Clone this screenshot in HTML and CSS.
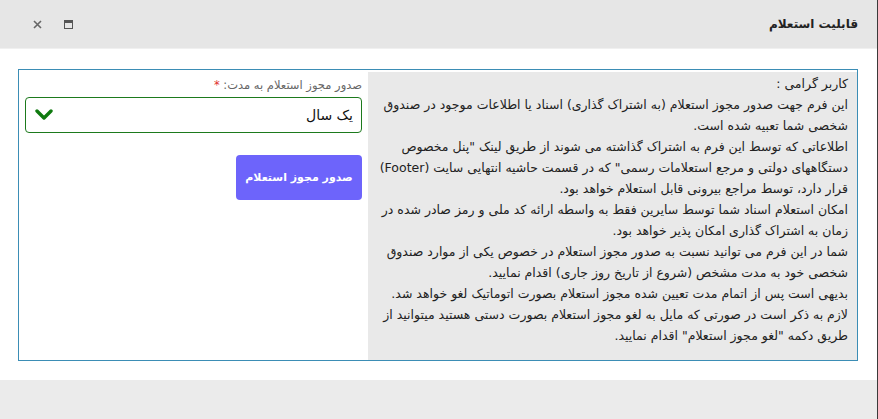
FILE: index.html
```html
<!DOCTYPE html>
<html lang="fa" dir="rtl">
<head>
<meta charset="utf-8">
<title>قابلیت استعلام</title>
<link rel="stylesheet" href="styles.css">
</head>
<body>
<div class="window">
  <header class="titlebar">
    <h1 class="title">قابلیت استعلام</h1>
    <div class="controls">
      <button class="ctl" aria-label="restore">
        <svg width="9" height="9" viewBox="0 0 9 9"><rect x="0.5" y="0.5" width="8" height="8" fill="none" stroke="#555" stroke-width="1"/><rect x="0" y="0" width="9" height="3" fill="#555"/></svg>
      </button>
      <button class="ctl" aria-label="close">
        <svg width="9" height="9" viewBox="0 0 9 9"><path d="M1 1 L8 8 M8 1 L1 8" stroke="#666" stroke-width="1.6" fill="none"/></svg>
      </button>
    </div>
  </header>
  <main class="content">
    <div class="panel">
      <section class="info">
        کاربر گرامی :<br>
        این فرم جهت صدور مجوز استعلام (به اشتراک گذاری) اسناد یا اطلاعات موجود در صندوق شخصی شما تعبیه شده است.<br>
        اطلاعاتی که توسط این فرم به اشتراک گذاشته می شوند از طریق لینک "پنل مخصوص دستگاههای دولتی و مرجع استعلامات رسمی" که در قسمت حاشیه انتهایی سایت (Footer) قرار دارد، توسط مراجع بیرونی قابل استعلام خواهد بود.<br>
        امکان استعلام اسناد شما توسط سایرین فقط به واسطه ارائه کد ملی و رمز صادر شده در زمان به اشتراک گذاری امکان پذیر خواهد بود.<br>
        شما در این فرم می توانید نسبت به صدور مجوز استعلام در خصوص یکی از موارد صندوق شخصی خود به مدت مشخص (شروع از تاریخ روز جاری) اقدام نمایید.<br>
        بدیهی است پس از اتمام مدت تعیین شده مجوز استعلام بصورت اتوماتیک لغو خواهد شد.<br>
        لازم به ذکر است در صورتی که مایل به لغو مجوز استعلام بصورت دستی هستید میتوانید از طریق دکمه "لغو مجوز استعلام" اقدام نمایید.
      </section>
      <section class="form">
        <label class="label">صدور مجوز استعلام به مدت: <span class="req">*</span></label>
        <div class="select">
          <span class="select-value">یک سال</span>
          <svg class="chev" width="18" height="12" viewBox="0 0 18 12"><path d="M2 2 L9 9 L16 2" stroke="#0f7a0f" stroke-width="3.4" fill="none" stroke-linecap="round" stroke-linejoin="round"/></svg>
        </div>
        <div class="actions">
          <button class="btn">صدور مجوز استعلام</button>
        </div>
      </section>
    </div>
  </main>
  <footer class="footer"></footer>
</div>
</body>
</html>
```
FILE: styles.css
```css
html, body {
  margin: 0;
  padding: 0;
  background: #fff;
}
body {
  font-family: "DejaVu Sans", "Noto Sans", sans-serif;
  color: #222;
}
.window {
  width: 878px;
  height: 419px;
  box-sizing: border-box;
  border-right: 1px solid #3a3a3a;
  display: flex;
  flex-direction: column;
  background: #fff;
}
.titlebar {
  height: 48px;
  flex: none;
  background: #e6e6e6;
  display: flex;
  align-items: center;
  justify-content: space-between;
  padding: 0 19px 0 32px;
  border-bottom: 1px solid #f0f0f0;
}
.title {
  margin: 0;
  font-size: 12px;
  font-weight: bold;
  color: #222;
}
.controls {
  display: flex;
  align-items: center;
  gap: 21px;
}
.ctl {
  border: 0;
  background: none;
  padding: 0;
  width: 10px;
  height: 10px;
  display: flex;
  align-items: center;
  justify-content: center;
}
.content {
  flex: 1;
  padding: 20px 19px 19px 18px;
}
.panel {
  border: 1px solid #3b8db5;
  display: flex;
  height: 100%;
  box-sizing: border-box;
}
.info {
  flex: 0 0 489px;
  box-sizing: border-box;
  background: #e9e9e9;
  margin-top: 2px;
  padding: 1px 9px 0 10px;
  font-size: 12.5px;
  line-height: 21px;
  color: #222;
}
.form {
  flex: 1;
  padding: 7px 6px 0 6px;
  display: flex;
  flex-direction: column;
}
.label {
  font-size: 11.5px;
  color: #666;
  line-height: 16px;
}
.req {
  color: #e0302f;
}
.select {
  margin-top: 4px;
  height: 36px;
  box-sizing: border-box;
  border: 1px solid #1d7a1d;
  border-radius: 4px;
  display: flex;
  align-items: center;
  justify-content: space-between;
  padding: 0 8px 0 9px;
}
.select-value {
  font-size: 14px;
  color: #111;
}
.actions {
  margin-top: 22px;
  display: flex;
}
.btn {
  width: 126px;
  height: 45px;
  border: 0;
  border-radius: 4px;
  background: #6d64fb;
  color: #fff;
  font-family: inherit;
  font-size: 11px;
  font-weight: bold;
  white-space: nowrap;
  padding: 0;
}
.footer {
  height: 39px;
  flex: none;
  background: #ebebeb;
}
```
